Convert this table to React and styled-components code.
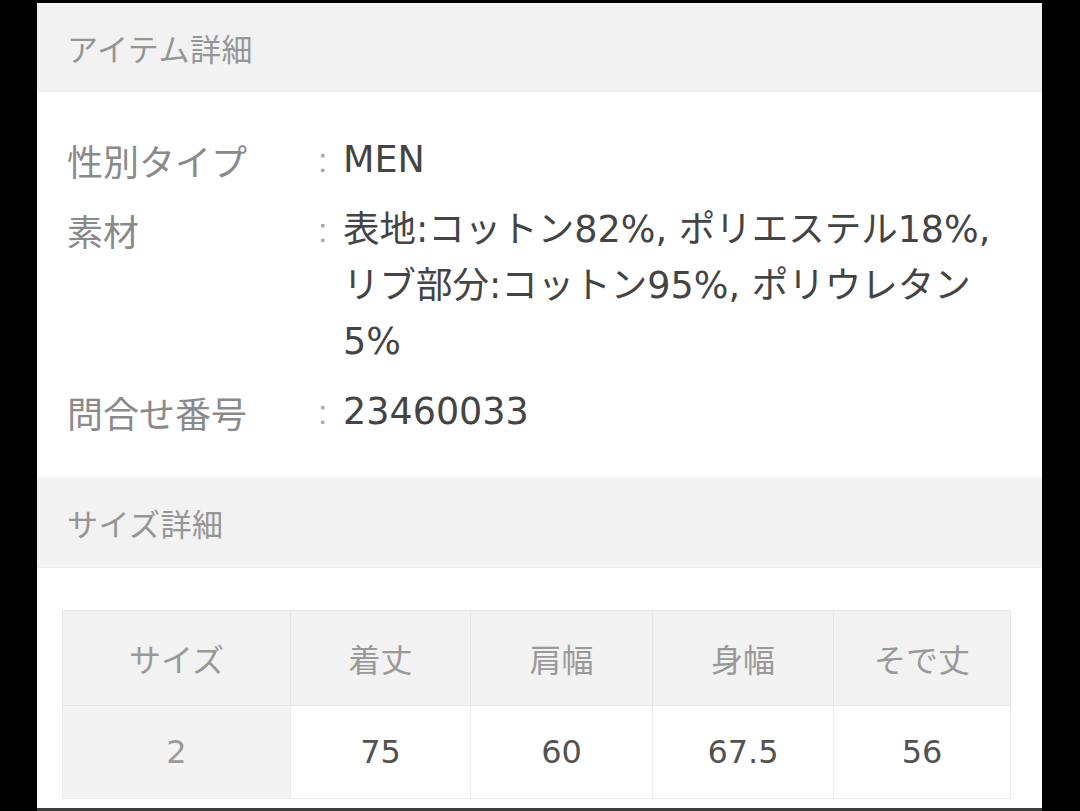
import React from "react";
import styled, { createGlobalStyle } from "styled-components";

const details = [
  { label: "性別タイプ", lines: ["MEN"] },
  {
    label: "素材",
    lines: [
      "表地:コットン82%, ポリエステル18%,",
      "リブ部分:コットン95%, ポリウレタン",
      "5%",
    ],
  },
  { label: "問合せ番号", lines: ["23460033"] },
];

const sizeCols = [
  { name: "サイズ", width: 228 },
  { name: "着丈", width: 180 },
  { name: "肩幅", width: 182 },
  { name: "身幅", width: 181 },
  { name: "そで丈", width: 177 },
];

const sizeRows = [["2", "75", "60", "67.5", "56"]];

const GlobalStyle = createGlobalStyle`
  html, body {
    margin: 0;
    padding: 0;
    background: #000;
  }
  body {
    font-family: "DejaVu Sans", "Noto Sans CJK JP", sans-serif;
  }
`;

const Page = styled.div`
  width: 1005px;
  height: 805px;
  margin: 3px 0 0 37px;
  background: #fff;
  border-bottom: 3px solid #3c3c3c;
  overflow: hidden;
  display: flex;
  flex-direction: column;
`;

const SectionHead = styled.div`
  height: ${(p) => p.h}px;
  box-sizing: border-box;
  display: flex;
  align-items: center;
  padding-left: 30px;
  background: #f2f2f2;
  border-bottom: 1px solid #ebebeb;
  color: #959595;
  font-family: "Noto Sans CJK JP", sans-serif;
  font-size: 31px;
  letter-spacing: 0.5px;
`;

const DetailBody = styled.div`
  height: 385px;
  box-sizing: border-box;
  padding: 40px 0 0 30px;
  display: flex;
  flex-direction: column;
  gap: 14px;
`;

const Row = styled.div`
  display: grid;
  grid-template-columns: 251px 25px 1fr;
  line-height: 56px;
`;

const Label = styled.div`
  color: #8a8a8a;
  font-family: "Noto Sans CJK JP", sans-serif;
  font-size: 36px;
`;

const Colon = styled.div`
  color: #a8a8a8;
  font-family: "Liberation Sans", sans-serif;
  font-size: 34px;
`;

const Value = styled.div`
  color: #444;
  font-family: "DejaVu Sans", "Noto Sans CJK JP", sans-serif;
  font-size: 36.5px;
  white-space: nowrap;
  span {
    display: block;
  }
`;

const TableArea = styled.div`
  flex: 1;
  padding: 42px 0 0 25px;
`;

const SizeTable = styled.table`
  border-collapse: collapse;
  table-layout: fixed;
  width: 948px;
  border: 1px solid #e8e8e8;
`;

const HeadCell = styled.th`
  height: 94px;
  padding: 0;
  background: #f2f2f2;
  border: 1px solid #e6e6e6;
  color: #999;
  font-weight: normal;
  font-family: "Noto Sans CJK JP", sans-serif;
  font-size: 32px;
`;

const Cell = styled.td`
  height: 92px;
  padding: 0;
  text-align: center;
  border: 1px solid #ebebeb;
  background: ${(p) => (p.muted ? "#f3f3f3" : "#fff")};
  color: ${(p) => (p.muted ? "#9a9a9a" : "#525252")};
  font-family: "DejaVu Sans", sans-serif;
  font-size: 32px;
`;

export default function App() {
  return (
    <>
      <GlobalStyle />
      <Page>
        <SectionHead h={89}>アイテム詳細</SectionHead>
        <DetailBody>
          {details.map((d) => (
            <Row key={d.label}>
              <Label>{d.label}</Label>
              <Colon>:</Colon>
              <Value>
                {d.lines.map((l, i) => (
                  <span key={i}>{l}</span>
                ))}
              </Value>
            </Row>
          ))}
        </DetailBody>
        <SectionHead h={91}>サイズ詳細</SectionHead>
        <TableArea>
          <SizeTable>
            <colgroup>
              {sizeCols.map((c) => (
                <col key={c.name} style={{ width: c.width }} />
              ))}
            </colgroup>
            <thead>
              <tr>
                {sizeCols.map((c) => (
                  <HeadCell key={c.name}>{c.name}</HeadCell>
                ))}
              </tr>
            </thead>
            <tbody>
              {sizeRows.map((r, ri) => (
                <tr key={ri}>
                  {r.map((v, i) => (
                    <Cell key={i} muted={i === 0}>
                      {v}
                    </Cell>
                  ))}
                </tr>
              ))}
            </tbody>
          </SizeTable>
        </TableArea>
      </Page>
    </>
  );
}
